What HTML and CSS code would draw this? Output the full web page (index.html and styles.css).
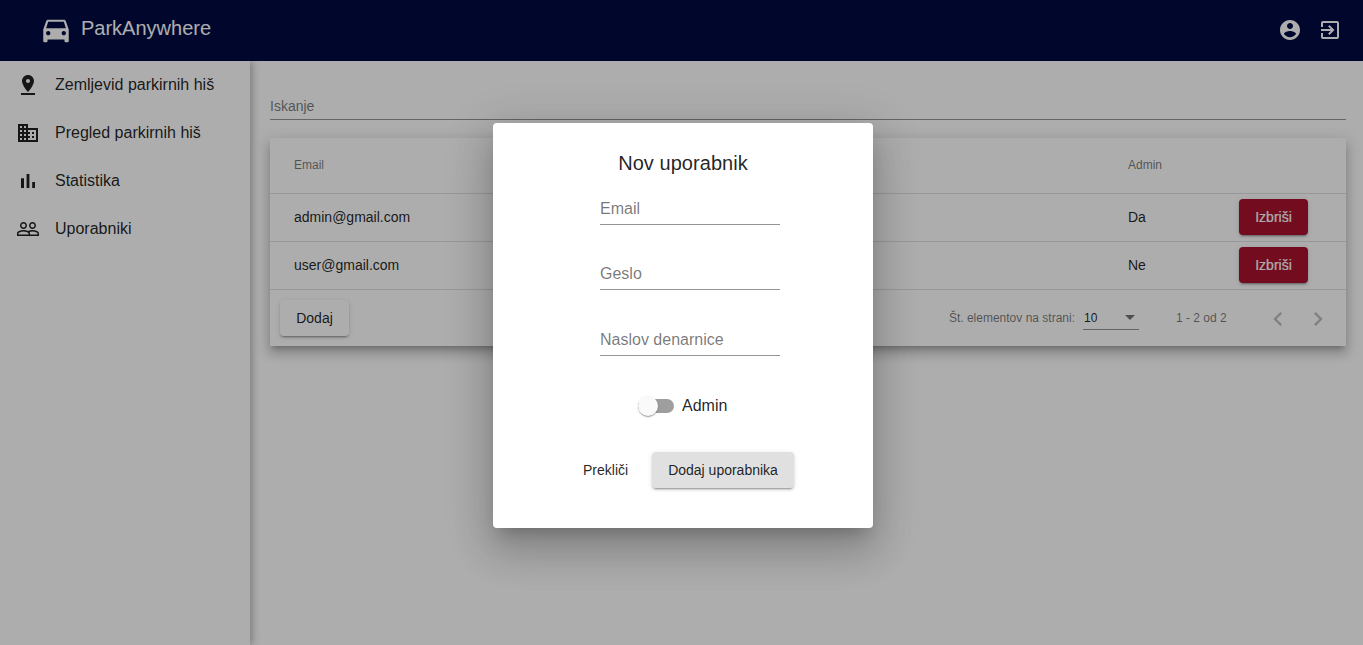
FILE: index.html
```html
<!DOCTYPE html>
<html lang="sl">
<head>
<meta charset="utf-8">
<title>ParkAnywhere</title>
<link rel="stylesheet" href="styles.css">
</head>
<body>
<div class="app">
  <header class="toolbar">
    <svg class="logo" viewBox="0 0 24 24"><path d="M18.920 5.010C18.720 4.420 18.160 4 17.500 4h-11c-.66 0-1.210.42-1.420 1.010L3 11v8c0 .55.45 1 1 1h1c.55 0 1-.45 1-1v-1h12v1c0 .55.45 1 1 1h1c.55 0 1-.45 1-1v-8l-2.080-5.990zM6.500 15c-.83 0-1.500-.67-1.500-1.500S5.670 12 6.500 12s1.500.67 1.500 1.500S7.330 15 6.500 15zm11 0c-.83 0-1.500-.67-1.500-1.500s.67-1.500 1.500-1.500 1.500.67 1.500 1.500-.67 1.500-1.500 1.500zM5 10l1.500-4.500h11L19 10H5z"/></svg>
    <span class="brand">ParkAnywhere</span>
    <svg class="tool-icon" viewBox="0 0 24 24"><path d="M12 2C6.480 2 2 6.480 2 12s4.480 10 10 10 10-4.480 10-10S17.520 2 12 2zm0 3c1.660 0 3 1.340 3 3s-1.340 3-3 3-3-1.340-3-3 1.340-3 3-3zm0 14.200c-2.500 0-4.710-1.280-6-3.220.030-1.990 4-3.080 6-3.080 1.990 0 5.970 1.090 6 3.080-1.290 1.940-3.500 3.220-6 3.220z"/></svg>
    <svg class="tool-icon" viewBox="0 0 24 24"><path d="M10.090 15.590L11.500 17l5-5-5-5-1.410 1.410L12.670 11H3v2h9.670l-2.580 2.590zM19 3H5c-1.110 0-2 .9-2 2v4h2V5h14v14H5v-4H3v4c0 1.100.89 2 2 2h14c1.100 0 2-.9 2-2V5c0-1.100-.9-2-2-2z"/></svg>
  </header>
  <div class="body">
    <nav class="sidebar">
      <a class="nav-item"><svg viewBox="0 0 24 24"><path d="M18 8c0-3.310-2.690-6-6-6S6 4.690 6 8c0 4.500 6 11 6 11s6-6.500 6-11zm-8 0c0-1.100.9-2 2-2s2 .9 2 2-.89 2-2 2c-1.100 0-2-.9-2-2zM5 20v2h14v-2H5z"/></svg><span>Zemljevid parkirnih hiš</span></a>
      <a class="nav-item"><svg viewBox="0 0 24 24"><path d="M12 7V3H2v18h20V7H12zM6 19H4v-2h2v2zm0-4H4v-2h2v2zm0-4H4V9h2v2zm0-4H4V5h2v2zm4 12H8v-2h2v2zm0-4H8v-2h2v2zm0-4H8V9h2v2zm0-4H8V5h2v2zm10 12h-8v-2h2v-2h-2v-2h2v-2h-2V9h8v10zm-2-8h-2v2h2v-2zm0 4h-2v2h2v-2z"/></svg><span>Pregled parkirnih hiš</span></a>
      <a class="nav-item"><svg viewBox="0 0 24 24"><path d="M5 9.200h3V19H5zM10.600 5h2.800v14h-2.800zm5.600 8H19v6h-2.800z"/></svg><span>Statistika</span></a>
      <a class="nav-item"><svg viewBox="0 0 24 24"><path d="M16.500 13c-1.200 0-3.070.34-4.500 1-1.430-.67-3.300-1-4.500-1C5.330 13 1 14.080 1 16.250V19h22v-2.750c0-2.170-4.330-3.250-6.500-3.250zm-4 4.500h-10v-1.250c0-.54 2.560-1.750 5-1.750s5 1.210 5 1.750v1.250zm9 0H14v-1.250c0-.46-.2-.86-.52-1.220.88-.3 1.960-.53 3.020-.53 2.440 0 5 1.210 5 1.750v1.250zM7.500 12c1.930 0 3.500-1.570 3.500-3.500S9.430 5 7.500 5 4 6.570 4 8.500 5.570 12 7.500 12zm0-5.500c1.100 0 2 .9 2 2s-.9 2-2 2-2-.9-2-2 .9-2 2-2zm9 5.500c1.930 0 3.500-1.570 3.500-3.500S18.430 5 16.500 5 13 6.570 13 8.500s1.570 3.500 3.500 3.500zm0-5.500c1.100 0 2 .9 2 2s-.9 2-2 2-2-.9-2-2 .9-2 2-2z"/></svg><span>Uporabniki</span></a>
    </nav>
    <main class="content">
      <div class="search">Iskanje</div>
      <section class="card">
        <div class="row head"><span>Email</span><span>Admin</span></div>
        <div class="row"><span>admin@gmail.com</span><span>Da</span><button class="btn danger">Izbriši</button></div>
        <div class="row"><span>user@gmail.com</span><span>Ne</span><button class="btn danger">Izbriši</button></div>
        <footer class="card-foot">
          <button class="btn raised">Dodaj</button>
          <span class="page-label">Št. elementov na strani:</span>
          <div class="select"><span>10</span><i class="caret"></i></div>
          <span class="range">1 - 2 od 2</span>
          <svg class="chevron" viewBox="0 0 24 24"><path d="M15.410 7.410L14 6l-6 6 6 6 1.410-1.410L10.830 12z"/></svg>
          <svg class="chevron" viewBox="0 0 24 24"><path d="M10 6L8.590 7.410 13.170 12l-4.580 4.590L10 18l6-6z"/></svg>
        </footer>
      </section>
    </main>
  </div>
</div>
<div class="backdrop">
  <div class="dialog">
    <h1 class="title">Nov uporabnik</h1>
    <div class="fields">
      <div class="field">Email</div>
      <div class="field">Geslo</div>
      <div class="field last">Naslov denarnice</div>
    </div>
    <div class="toggle"><span class="track"><i class="thumb"></i></span><span>Admin</span></div>
    <div class="actions">
      <button class="btn">Prekliči</button>
      <button class="btn raised grey">Dodaj uporabnika</button>
    </div>
  </div>
</div>
</body>
</html>
```
FILE: styles.css
```css
* { box-sizing: border-box; }

body {
  margin: 0;
  height: 645px;
  overflow: hidden;
  background: #fff;
  font-family: "Liberation Sans", Arial, sans-serif;
  color: rgba(0, 0, 0, .87);
}

.app { display: flex; flex-direction: column; height: 645px; }

.toolbar {
  display: flex;
  align-items: center;
  height: 61px;
  padding: 0 21px 0 39px;
  background: #000a42;
  color: #fff;
}
.toolbar svg { fill: #fff; }
.logo { width: 34px; height: 34px; }
.brand {
  flex: 1;
  margin-left: 8px;
  padding-bottom: 5px;
  font-size: 20px;
}
.tool-icon { width: 24px; height: 24px; margin-left: 16px; margin-bottom: 1px; }

.body { display: flex; flex: 1; }

.sidebar {
  width: 250px;
  box-shadow: 2px 0 8px rgba(0, 0, 0, .3);
  clip-path: inset(0 -40px 0 0);
}
.nav-item {
  display: flex;
  align-items: center;
  height: 48px;
  padding-left: 16px;
  gap: 15px;
  font-size: 16px;
}
.nav-item svg { width: 24px; height: 24px; fill: rgba(0, 0, 0, .87); }
.nav-item span { padding-bottom: 1px; }

.content { flex: 1; padding: 36px 17px 0 20px; }

.search {
  height: 23px;
  margin-bottom: 18px;
  border-bottom: 1px solid rgba(0, 0, 0, .42);
  font-size: 14px;
  line-height: 18px;
  color: rgba(0, 0, 0, .54);
}

.card {
  background: #fff;
  box-shadow: 0 5px 5px -3px rgba(0, 0, 0, .2), 0 8px 10px 1px rgba(0, 0, 0, .14), 0 3px 14px 2px rgba(0, 0, 0, .12);
}

.row {
  display: grid;
  grid-template-columns: 834px 111px auto;
  justify-content: start;
  align-items: center;
  height: 48px;
  padding-left: 24px;
  border-bottom: 1px solid rgba(0, 0, 0, .12);
  font-size: 14px;
}
.row.head { height: 56px; font-size: 12px; color: rgba(0, 0, 0, .54); }
.row span { padding-bottom: 1px; }

.btn {
  height: 36px;
  padding: 0 16px;
  border: 0;
  border-radius: 4px;
  background: transparent;
  font-family: inherit;
  font-size: 14px;
  line-height: 36px;
  color: rgba(0, 0, 0, .87);
}
.btn.danger, .btn.raised {
  box-shadow: 0 3px 1px -2px rgba(0, 0, 0, .2), 0 2px 2px 0 rgba(0, 0, 0, .14), 0 1px 5px 0 rgba(0, 0, 0, .12);
}
.btn.danger {
  width: 69px;
  margin-bottom: 1px;
  padding: 0;
  background: #ac122f;
  color: #fff;
  -webkit-text-stroke: .2px #fff;
}
.btn.raised { background: #fff; }
.btn.raised.grey { background: #e0e0e0; }

.card-foot {
  display: flex;
  align-items: center;
  height: 56px;
  padding: 0 14px 0 10px;
  font-size: 12px;
  color: rgba(0, 0, 0, .54);
}
.card-foot .btn { width: 69px; padding: 0; }
.page-label { margin-left: auto; }
.select {
  display: flex;
  justify-content: space-between;
  align-items: center;
  width: 56px;
  height: 24px;
  margin: 0 37px 0 8px;
  padding: 0 4px 0 1px;
  border-bottom: 1px solid rgba(0, 0, 0, .42);
  color: rgba(0, 0, 0, .87);
}
.caret {
  border: 5px solid transparent;
  border-top-color: rgba(0, 0, 0, .54);
  border-bottom: 0;
}
.range { width: 50px; margin-right: 40px; white-space: nowrap; }
.chevron { width: 28px; height: 28px; margin: 1px 0 0 12px; fill: rgba(0, 0, 0, .26); }
.range + .chevron { margin-left: -2px; }

.backdrop {
  position: absolute;
  inset: 0;
  display: flex;
  justify-content: center;
  align-items: flex-start;
  padding: 123px 0 0 3px;
  background: rgba(0, 0, 0, .32);
}
.dialog {
  width: 380px;
  height: 405px;
  padding-top: 28px;
  border-radius: 4px;
  background: #fff;
  box-shadow: 0 11px 15px -7px rgba(0, 0, 0, .2), 0 24px 38px 3px rgba(0, 0, 0, .14), 0 9px 46px 8px rgba(0, 0, 0, .12);
}
.title {
  margin: 0 0 23px;
  font-size: 20px;
  font-weight: 400;
  line-height: 24px;
  letter-spacing: .05px;
  text-align: center;
}
.fields { display: flex; flex-direction: column; gap: 38px; padding-left: 107px; }
.field {
  width: 180px;
  height: 27px;
  border-bottom: 1px solid rgba(0, 0, 0, .42);
  font-size: 16px;
  line-height: 22px;
  color: rgba(0, 0, 0, .54);
}
.field.last { margin-top: 1px; }
.toggle {
  display: flex;
  align-items: center;
  gap: 8px;
  height: 24px;
  margin: 38px 0 0 145px;
  font-size: 16px;
}
.toggle span:last-child { padding-bottom: 1px; }
.track {
  position: relative;
  width: 36px;
  height: 14px;
  border-radius: 8px;
  background: #9e9e9e;
}
.thumb {
  position: absolute;
  top: -3px;
  left: 0;
  width: 20px;
  height: 20px;
  border-radius: 50%;
  background: #fafafa;
  box-shadow: 0 2px 1px -1px rgba(0, 0, 0, .2), 0 1px 1px 0 rgba(0, 0, 0, .14), 0 1px 3px 0 rgba(0, 0, 0, .12);
}
.actions { display: flex; gap: 8px; margin: 34px 0 0 74px; }
```
